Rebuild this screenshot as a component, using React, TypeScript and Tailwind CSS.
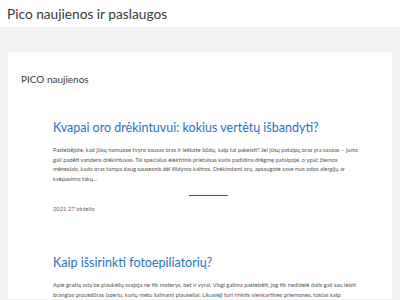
export default function App() {
  const posts = [
    {
      title: 'Kvapai oro drėkintuvui: kokius vertėtų išbandyti?',
      excerpt:
        'Pastebėjote, kad jūsų namuose tvyro sausas oras ir ieškote būdų, kaip tai pakeisti? Jei jūsų patalpų oras yra sausas – jums gali padėti vandens drėkintuvas. Tai specialus elektrinis prietaisas kuris padidina drėgmę patalpoje, o ypač žiemos mėnesiais, kada oras tampa daug sausesnis dėl šildymo kaitros. Drėkindami orą, apsaugote save nuo odos alergijų ar kvėpavimo takų…',
      date: '2021 27 birželio',
    },
    {
      title: 'Kaip išsirinkti fotoepiliatorių?',
      excerpt:
        'Apie gražią odą be plaukelių svajoja ne tik moterys, bet ir vyrai. Visgi galima pastebėti, jog tik nedidelė dalis gali sau leisti brangias procedūras lazeriu, kurių metu šalinami plaukeliai. Likusieji turi rinktis vienkartines priemones, tokias kaip:',
      date: '',
    },
  ];

  return (
    <div className="min-h-screen bg-[#f3f3f3] font-['Lato','Noto_Sans',sans-serif]">
      {/* Header */}
      <header className="h-[27px] bg-white flex items-center px-[7px]">
        <span className="text-[13.7px] leading-none text-[#3a3a3a]">Pico naujienos ir paslaugos</span>
      </header>

      <main className="px-2 pt-[25px]">
        <div className="bg-white pt-[20px]">
          <h2 className="px-[13px] text-[10px] leading-[14px] text-[#3a3a3a]">PICO naujienos</h2>

          <div className="pt-[33px] pl-[45px] pr-[28px]">
            {posts.map((p, i) => (
              <article key={i} className={i > 0 ? 'pt-[40px]' : ''}>
                <h3 className="text-[12.5px] leading-[18px] text-[#1e73be]">{p.title}</h3>
                <p className="mt-[8px] text-[5.8px] leading-[9.7px] text-[#555]">{p.excerpt}</p>
                {p.date && (
                  <>
                    <div className="flex justify-center pt-[11px]">
                      <div className="w-[39px] h-[1px] bg-[#555]" />
                    </div>
                    <div className="pt-[8px] text-[5.8px] leading-[10px] text-[#666]">{p.date}</div>
                  </>
                )}
              </article>
            ))}
          </div>
        </div>
      </main>
    </div>
  );
}
